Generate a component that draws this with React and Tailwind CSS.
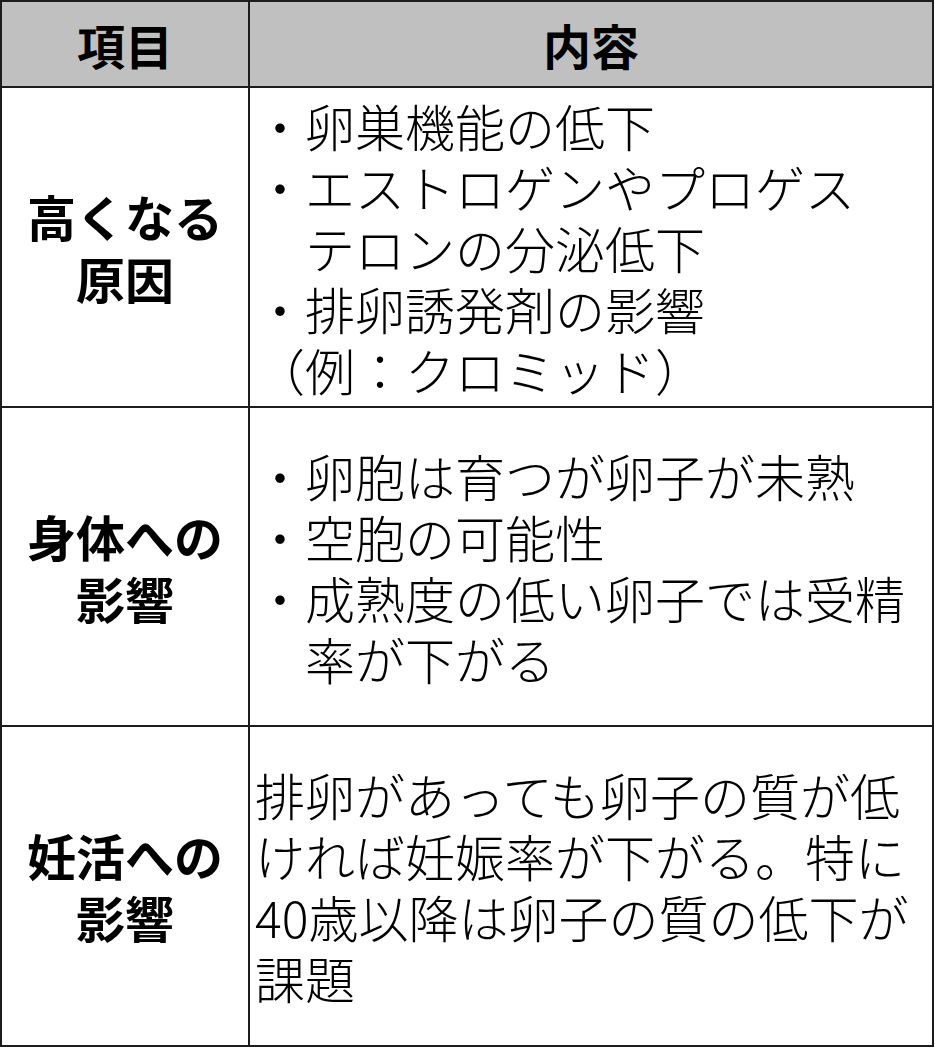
import React from "react";

const rows = [
  {
    label: ["高くなる", "原因"],
    lines: [
      { text: "・卵巣機能の低下" },
      { text: "・エストロゲンやプロゲス" },
      { text: "テロンの分泌低下", indent: true },
      { text: "・排卵誘発剤の影響" },
      { text: "（例：クロミッド）" },
    ],
  },
  {
    label: ["身体への", "影響"],
    lines: [
      { text: "・卵胞は育つが卵子が未熟" },
      { text: "・空胞の可能性" },
      { text: "・成熟度の低い卵子では受精" },
      { text: "率が下がる", indent: true },
    ],
  },
  {
    label: ["妊活への", "影響"],
    lines: [
      { text: "排卵があっても卵子の質が低" },
      { text: "ければ妊娠率が下がる。特に" },
      { text: "40歳以降は卵子の質の低下が" },
      { text: "課題" },
    ],
  },
];

const App = () => {
  return (
    <div
      className="w-[935px] h-[1049px] bg-white text-black"
      style={{ fontFamily: '"Noto Sans CJK JP", "Noto Sans", sans-serif' }}
    >
      <div className="w-[934px] bg-[#1c1c1c] p-[2px] grid gap-[2px] grid-cols-[246px_1fr] grid-rows-[84px_318px_317px_318px]">
        <div className="bg-[#c0c0c0] flex items-center justify-center text-[48px] font-bold leading-none">
          項目
        </div>
        <div className="bg-[#c0c0c0] flex items-center justify-center text-[48px] font-bold leading-none">
          内容
        </div>
        {rows.map((row, i) => (
          <React.Fragment key={i}>
            <div className="bg-white flex flex-col items-center justify-center text-[49px] font-bold leading-[62px]">
              {row.label.map((l, j) => (
                <div key={j}>{l}</div>
              ))}
            </div>
            <div className="bg-white flex flex-col justify-center pl-[5px] text-[50px] font-light leading-[61px] whitespace-nowrap font-['Noto_Sans_CJK_JP_Light','Noto_Sans_CJK_JP_DemiLight','Noto_Sans_CJK_JP',sans-serif]">
              {row.lines.map((line, j) => (
                <div key={j} className={line.indent ? "pl-[50px]" : ""}>
                  {line.text}
                </div>
              ))}
            </div>
          </React.Fragment>
        ))}
      </div>
    </div>
  );
};

export default App;
